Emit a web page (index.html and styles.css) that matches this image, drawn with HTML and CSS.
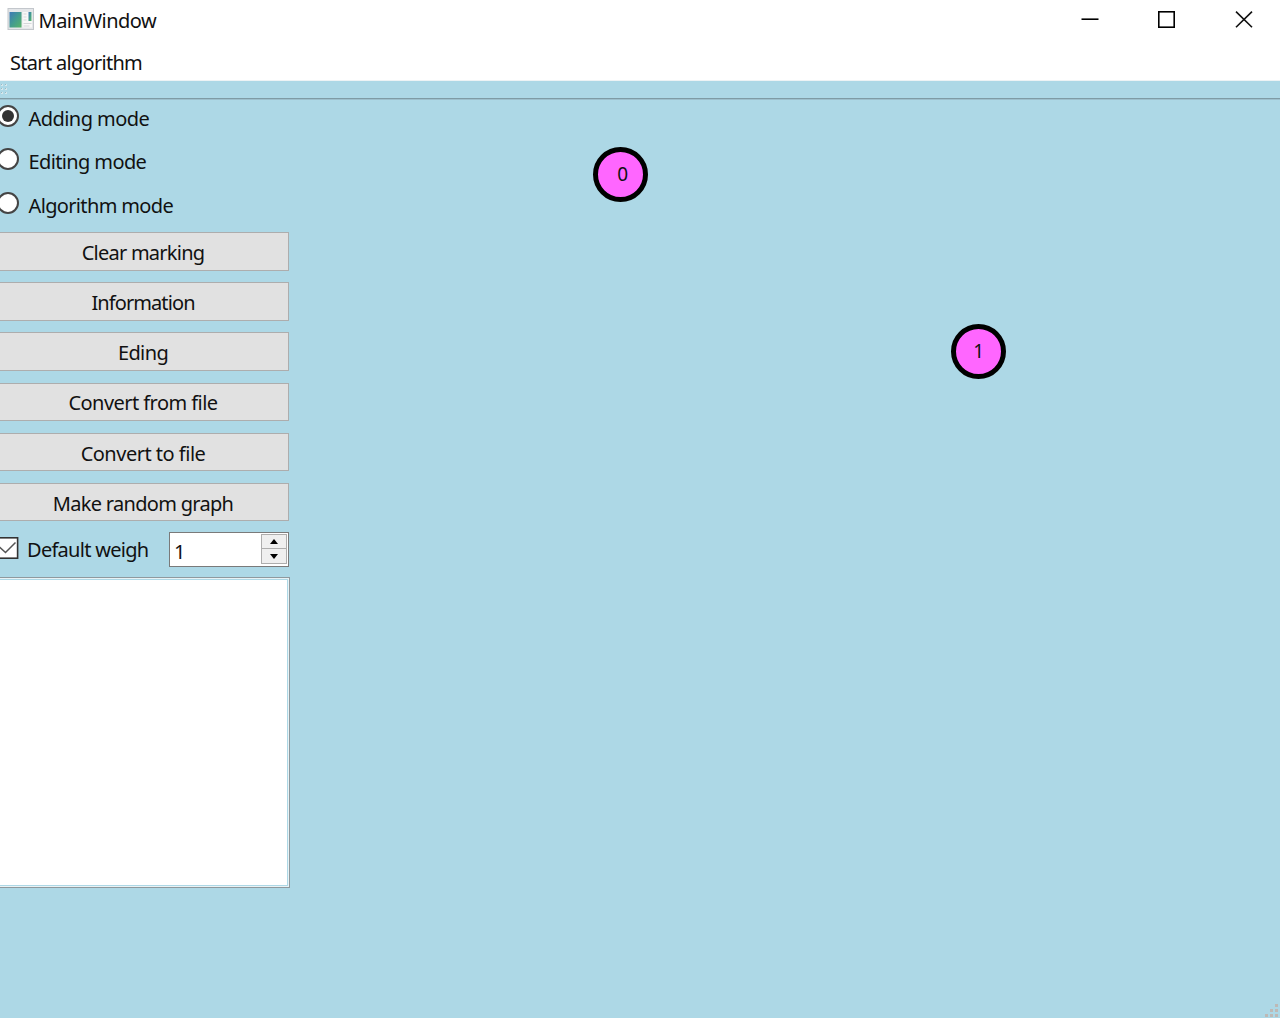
FILE: index.html
```html
<!DOCTYPE html>
<html lang="en">
<head>
<meta charset="utf-8">
<title>MainWindow</title>
<link rel="stylesheet" href="styles.css">
</head>
<body>
<div class="window">
  <header class="titlebar">
    <svg class="app-icon" width="27" height="23" viewBox="0 0 27 23">
      <defs><linearGradient id="pane" x1="0" y1="0" x2="1" y2="1"><stop offset="0" stop-color="#3d78b8"/><stop offset=".5" stop-color="#439c8f"/><stop offset="1" stop-color="#58b568"/></linearGradient></defs>
      <rect x="1" y=".5" width="25.500" height="21" fill="#e4e6e9" stroke="#c3c7cc"/>
      <rect x="2.500" y="4" width="12" height="15.500" fill="url(#pane)"/>
      <rect x="15.500" y="4" width="9.500" height="15.500" fill="#f8f8f8"/>
      <rect x="21.500" y="4" width="3" height="9" fill="url(#pane)"/>
      <path d="M16.500 6h3M16.500 9h3M16.500 12h3M16.500 15.500h8M16.500 18h6" stroke="#d5d7da"/>
    </svg>
    <span class="title">MainWindow</span>
    <div class="controls">
      <svg width="18" height="18" viewBox="0 0 18 18"><path d="M.5 8.200h17" stroke="#000" stroke-width="1.600"/></svg>
      <svg width="18" height="18" viewBox="0 0 18 18"><rect x=".8" y=".8" width="15.400" height="15.400" fill="none" stroke="#000" stroke-width="1.600"/></svg>
      <svg width="18" height="18" viewBox="0 0 18 18"><path d="M1 .6 17 16.300M17 .6 1 16.300" stroke="#111" stroke-width="1.600"/></svg>
    </div>
  </header>
  <nav class="menubar"><span class="menu">Start algorithm</span></nav>
  <div class="toolbar">
    <svg width="8" height="12" viewBox="0 0 8 12"><path d="M0 1h2v2H0zM4 1h2v2H4zM0 5h2v2H0zM4 5h2v2H4zM0 9h2v2H0zM4 9h2v2H4z" fill="#d6e8ed"/><path d="M0 1h1v1H0zM4 1h1v1H4zM0 5h1v1H0zM4 5h1v1H4zM0 9h1v1H0zM4 9h1v1H4z" fill="#9cb9c2"/></svg>
  </div>
  <main class="content">
    <aside class="panel">
      <div class="radios">
        <label class="radio"><span class="ring checked"></span><span class="t-adding">Adding mode</span></label>
        <label class="radio"><span class="ring"></span><span class="t-editing">Editing mode</span></label>
        <label class="radio"><span class="ring"></span><span class="t-algorithm">Algorithm mode</span></label>
      </div>
      <div class="buttons">
        <button><span class="t-clear">Clear marking</span></button>
        <button><span class="t-info">Information</span></button>
        <button><span class="t-eding">Eding</span></button>
        <button><span class="t-from">Convert from file</span></button>
        <button><span class="t-to">Convert to file</span></button>
        <button><span class="t-random">Make random graph</span></button>
      </div>
      <div class="weight">
        <svg class="check" width="19" height="22" viewBox="0 0 19 22"><rect x="-3" y=".8" width="20.600" height="20.400" fill="#fff" stroke="#333" stroke-width="1.600"/><path d="M-1 9.500 5.500 15.500 15.500 5.500" fill="none" stroke="#555" stroke-width="1.500"/></svg>
        <span class="weight-label">Default weigh</span>
        <div class="spin">
          <span class="value">1</span>
          <div class="arrows">
            <span class="arrow"><svg width="8" height="5" viewBox="0 0 8 5"><path d="M0 5 4 0l4 5z"/></svg></span>
            <span class="arrow"><svg width="8" height="5" viewBox="0 0 8 5"><path d="M0 0h8L4 5z"/></svg></span>
          </div>
        </div>
      </div>
      <div class="output"></div>
    </aside>
    <section class="canvas">
      <div class="node node-0"><span>0</span></div>
      <div class="node node-1"><span>1</span></div>
    </section>
  </main>
  <svg class="grip" width="16" height="16" viewBox="0 0 16 16"><path d="M11 2h3v3h-3zM6 7h3v3H6zM11 7h3v3h-3zM1 12h3v3H1zM6 12h3v3H6zM11 12h3v3h-3z" fill="#bdb9b6"/></svg>
</div>
</body>
</html>
```
FILE: styles.css
```css
* { box-sizing: border-box; }
body {
  margin: 0;
  font: 20px/26px "Noto Sans", "Open Sans", sans-serif;
  color: #111;
}
svg { display: block; flex: none; }
.window {
  position: relative;
  width: 1280px;
  height: 1018px;
  display: flex;
  flex-direction: column;
  background: #add8e6;
  overflow: hidden;
}
.titlebar {
  height: 40px;
  flex: none;
  display: flex;
  align-items: center;
  padding: 0 27px 1px 7px;
  background: #fff;
}
.title { margin: 3px 0 0 4.500px; letter-spacing: -.5px; white-space: nowrap; }
.controls { margin-left: auto; display: flex; gap: 59px; }
.menubar {
  height: 41px;
  flex: none;
  padding: 10px 10px 0;
  background: #fff;
  border-bottom: 1px solid #edf3f5;
}
.menu { letter-spacing: -.7px; white-space: nowrap; }
.toolbar {
  height: 19px;
  flex: none;
  padding: 2px 1px;
  border-bottom: 1px solid #9dc0cd;
  box-shadow: inset 0 -1px #7f9ba5;
}
.content { flex: 1; display: flex; }
.panel { width: 290px; flex: none; display: flex; flex-direction: column; white-space: nowrap; }
.radios { height: 132px; padding-top: 5px; }
.radio { display: flex; height: 43.400px; gap: 9.500px; }
.radio span:last-child { margin-top: 1px; }
.t-adding { letter-spacing: -.55px; }
.t-editing { letter-spacing: -.62px; }
.t-algorithm { letter-spacing: -.65px; }
.ring {
  width: 22px;
  height: 22px;
  margin: 0 0 0 -3px;
  flex: none;
  display: flex;
  align-items: center;
  justify-content: center;
  border: 2px solid #444;
  border-radius: 50%;
  background: #fff;
}
.checked::after { content: ""; width: 12px; height: 12px; border-radius: 50%; background: #333; }
.buttons { display: flex; flex-direction: column; gap: 11.700px; }
button {
  width: 292px;
  height: 38.500px;
  margin-left: -3px;
  padding: 3px 0 0;
  border: 1px solid #adadad;
  background: #e1e1e1;
  font: inherit;
  color: inherit;
}
.t-clear { letter-spacing: -.75px; }
.t-info { letter-spacing: -.9px; }
.t-eding { letter-spacing: -.6px; }
.t-from { letter-spacing: -.55px; }
.t-to { letter-spacing: -.5px; }
.t-random { letter-spacing: -.7px; }
.weight { display: flex; height: 35px; margin-top: 10.500px; }
.check { margin-top: 5px; }
.weight-label { width: 142px; margin: 5px 0 0 8px; letter-spacing: -.72px; }
.spin {
  width: 120px;
  flex: none;
  display: flex;
  justify-content: space-between;
  padding: 1px;
  border: 1px solid #7a7a7a;
  background: #fff;
}
.value { margin: 5px 0 0 3px; }
.arrows { width: 26px; height: 30px; display: flex; flex-direction: column; border: 1px solid #adadad; }
.arrow { flex: 1; display: flex; align-items: center; justify-content: center; background: #efefef; }
.arrow + .arrow { border-top: 1px solid #adadad; }
.output {
  height: 311px;
  margin-top: 10px;
  border: 1px solid #8e999e;
  border-left: 0;
  background: #fff;
  box-shadow: inset -1px 1px #e8f2f5, inset 0 -1px #e8f2f5, inset -2px 2px #add8e6, inset 0 -2px #add8e6;
}
.canvas { position: relative; flex: 1; }
.node {
  position: absolute;
  width: 55px;
  height: 55px;
  border: 5px solid #000;
  border-radius: 50%;
  background: #ff66ff;
  text-align: center;
  line-height: 44px;
}
.node-0 { left: 303.300px; top: 46.500px; padding-left: 4px; }
.node-1 { left: 661.300px; top: 223.500px; }
.node span { font-size: 19px; }
.grip { position: absolute; right: 0; bottom: 0; }
```
